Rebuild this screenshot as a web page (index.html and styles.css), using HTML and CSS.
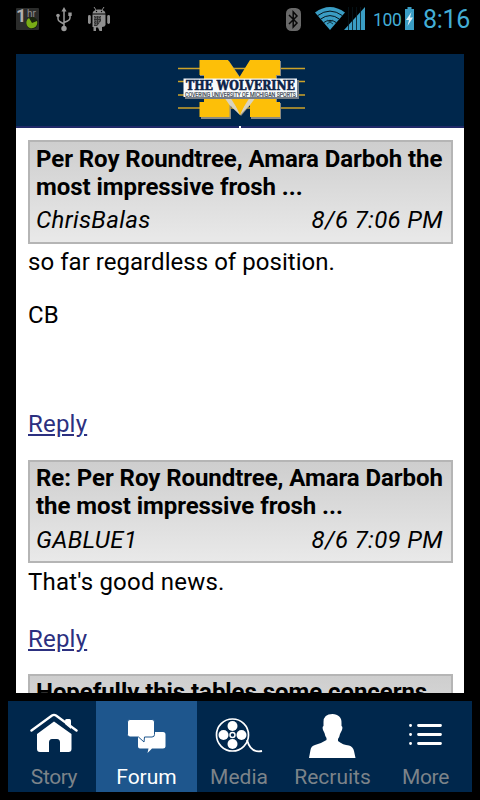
FILE: index.html
```html
<!DOCTYPE html>
<html lang="en">
<head>
  <meta charset="UTF-8" />
  <meta name="viewport" content="width=device-width, initial-scale=1.0"/>
  <title>The Wolverine - Forum</title>
  <link rel="stylesheet" href="styles.css">
</head>
<body>

  <div class="status-bar">
    <div class="status-left">
      <svg class="timer-icon" width="24" height="24" viewBox="0 0 24 24">
        <rect x="0" y="0" width="23" height="22" rx="1" fill="#2b2c2b"/>
        <text x="0" y="14" class="timer-num">1</text>
        <text x="11" y="9" class="timer-unit">hr</text>
        <circle cx="16" cy="15" r="6" fill="#19240c"/>
        <path d="M16 15L13 10A5.500 5.500 0 1 0 21 13Z" fill="#79ad16"/>
      </svg>
      <svg class="usb-icon" width="16" height="25" viewBox="0 0 16 25" fill="none" stroke="#9a9a9a" stroke-width="1.500">
        <path d="M8 4V21M2 9V12Q2 14 4.500 15L8 17M14 8V11Q14 13 11.500 14L8 15.500"/>
        <path d="M8 0L5.500 4.500H10.500Z" fill="#9a9a9a" stroke="none"/>
        <circle cx="8" cy="21.500" r="2.700" fill="#9a9a9a" stroke="none"/>
        <circle cx="2" cy="8.500" r="1.800" fill="#9a9a9a" stroke="none"/>
        <path d="M12.300 5.500H15.700V9H12.300Z" fill="#9a9a9a" stroke="none"/>
      </svg>
      <svg class="droid-icon" width="22" height="26" viewBox="0 0 22 26" fill="#8f8f8f">
        <path d="M6 1L8 4M16 1L14 4" stroke="#8f8f8f"/>
        <path d="M4.500 7.500C5 2 17 2 17.500 7.500Z"/>
        <rect x="0" y="9" width="2.800" height="9" rx="1.400"/>
        <rect x="19.200" y="9" width="2.800" height="9" rx="1.400"/>
        <path d="M4.500 8.500H17.500V19Q17 21 14 21V25H11.500L10 21.500H8V25H5.500V21H4.500Z"/>
        <path d="M6 10H13V15L9 20H6Z" fill="#303030"/>
        <path d="M6 12H13M6 15H12M6 18H10M8 10V20M11 10V17" stroke="#777" stroke-dasharray="1 1"/>
        <circle cx="8.500" cy="5.500" r=".7" fill="#000"/>
        <circle cx="13.500" cy="5.500" r=".7" fill="#000"/>
      </svg>
    </div>
    <div class="status-right">
      <svg class="bt-icon" width="15" height="23" viewBox="0 0 15 23">
        <rect width="15" height="23" rx="5.500" fill="#696969"/>
        <path d="M3 7L11 15L7.200 19V4L11 8L3 16" fill="none" stroke="#080808" stroke-width="1.500"/>
      </svg>
      <svg class="wifi-icon" width="30" height="23" viewBox="0 0 30 23">
        <path d="M0 5.500Q15 -5.500 30 5.500L15 23Z" fill="#3a9dc4"/>
        <path d="M2.500 8.700Q15 -.5 27.500 8.700M5.500 12.200Q15 5 24.500 12.200M8.500 15.700Q15 11 21.500 15.700" fill="none" stroke="#06151c" stroke-width="1"/>
        <path d="M12 13L18 17M18 13L12 17" stroke="#123d4d" stroke-width="1"/>
      </svg>
      <svg class="signal-icon" width="22" height="23" viewBox="0 0 22 23">
        <path d="M0 23L21 0V23Z" fill="#3a9dc4"/>
        <path d="M4.500 0V23M8.500 0V23M12.500 0V23M16.500 0V23" stroke="#06151c" stroke-width=".8"/>
      </svg>
      <span class="battery-level">100</span>
      <svg class="battery-icon" width="9" height="23" viewBox="0 0 9 23">
        <path d="M2.500 0H6.500V2H9V23H0V2H2.500Z" fill="#3a9dc4"/>
        <path d="M6.500 5L1 13H4L2.500 19L8 10.500H5Z" fill="#e2f2f8"/>
      </svg>
      <span class="clock">8:16</span>
    </div>
  </div>

  <div class="screen">
    <div class="header">
      <svg class="logo" width="128" height="62" viewBox="0 0 128 62">
        <path d="M0 9.500H127M0 22.500H127M0 36H127M0 49H127" stroke="#cda329" stroke-width="1.500"/>
        <path d="M22 2H51L62 18L72 2H103V17H99V44H103V60H73V45L63 57L53 45V60H23V44H27V17H22Z" fill="#8d8c82"/>
        <path d="M21.500 1H50L61.500 18L72 1H102V16H98V43H102V58H72V43L62 56L51.500 43V58H21.500V43H26V16H21.500Z" fill="#fdbf08"/>
        <path d="M46 38H54L62 56L51.500 46ZM70 38H78L72 46L62 56Z" fill="#d9d3bf"/>
        <path d="M52 38H72L62 54Z" fill="#fdbf08"/>
        <rect x="7" y="21" width="114" height="19" fill="#777e86"/>
        <rect x="5.500" y="19.500" width="113.500" height="18.500" fill="#f8fafb"/>
        <text class="logo-name" x="8" y="30.500" textLength="109" lengthAdjust="spacingAndGlyphs">THE WOLVERINE</text>
        <text class="logo-tagline" x="7" y="37.500" textLength="111" lengthAdjust="spacingAndGlyphs">COVERING UNIVERSITY OF MICHIGAN SPORTS</text>
      </svg>
      <span class="notch"></span>
    </div>

    <div class="post">
      <div class="post-head">
        <div class="post-title">Per Roy Roundtree, Amara Darboh the<br>most impressive frosh ...</div>
        <div class="post-info"><span>ChrisBalas</span><span>8/6 7:06 PM</span></div>
      </div>
      <div class="post-body long">
        <p>so far regardless of position.</p>
        <p>CB</p>
      </div>
      <a class="reply" href="#">Reply</a>
    </div>

    <div class="post">
      <div class="post-head">
        <div class="post-title">Re: Per Roy Roundtree, Amara Darboh<br>the most impressive frosh ...</div>
        <div class="post-info"><span>GABLUE1</span><span>8/6 7:09 PM</span></div>
      </div>
      <div class="post-body">
        <p>That's good news.</p>
      </div>
      <a class="reply" href="#">Reply</a>
    </div>

    <div class="post">
      <div class="post-head">
        <div class="post-title">Hopefully this tables some concerns</div>
      </div>
    </div>
  </div>

  <div class="tab-bar">
    <div class="tab story">
      <svg width="50" height="44" viewBox="0 0 50 44" fill="#fff">
        <path d="M36 6.500Q36 5 37.500 5H40.500Q42 5 42 6.500V15L36 10Z"/>
        <path d="M2.500 16.500L23 1.500Q25 .2 27 1.500L47.500 16.500" fill="none" stroke="#fff" stroke-width="2.400" stroke-linecap="round"/>
        <path d="M25 7.500L42.500 20V35Q42.500 38 39.500 38H31V28.500Q31 25 28 25H23Q20 25 20 28.500V38H11Q8 38 8 35V20Z"/>
      </svg>
      <span>Story</span>
    </div>
    <div class="tab forum active">
      <svg width="50" height="44" viewBox="0 0 50 44" fill="#fff">
        <path d="M18 18H41Q43.500 18 43.500 20.500V32.500Q43.500 34.500 41 34.500H30L25.500 39L26.500 34.500H18Q16 34.500 16 32.500V20Q16 18 18 18Z"/>
        <path d="M8 5.500H30Q32.500 5.500 32.500 8V20.500Q32.500 23 30 23H22.500L22 28L16.500 23H8Q5.500 23 5.500 20.500V8Q5.500 5.500 8 5.500Z" stroke="#1e568d" stroke-width="1"/>
      </svg>
      <span>Forum</span>
    </div>
    <div class="tab media">
      <svg width="50" height="44" viewBox="0 0 50 44" fill="#fff">
        <circle cx="18.500" cy="21" r="16" fill="none" stroke="#fff" stroke-width="1.700"/>
        <circle cx="18.500" cy="12" r="5"/>
        <circle cx="18.500" cy="30" r="5"/>
        <circle cx="9.500" cy="21" r="5"/>
        <circle cx="27.500" cy="21" r="5"/>
        <circle cx="18.500" cy="21" r="2.500" fill="none" stroke="#fff" stroke-width="1.400"/>
        <path d="M33 26C35 33 39 39 48 37" fill="none" stroke="#fff" stroke-width="1.800"/>
      </svg>
      <span>Media</span>
    </div>
    <div class="tab recruits">
      <svg width="50" height="46" viewBox="0 0 50 46" fill="#fff">
        <path d="M24.500 1C30 1 34 4.500 33.500 10V13Q35 13.500 34 17L32 21Q31.500 24 30 26V28Q35 32 41 32.500Q45 33.500 46 38L47.500 45H1L2.500 37Q3 33 7 32Q14 30 18.500 27V25Q17 23 16.500 20L15 17Q14 13.500 15.500 13V9Q15.500 1 24.500 1Z"/>
      </svg>
      <span>Recruits</span>
    </div>
    <div class="tab more">
      <svg width="50" height="44" viewBox="0 0 50 44" stroke="#fff" stroke-linecap="round">
        <path d="M17.500 11.500H39.500M17.500 20.500H39.500M17.500 29.500H39.500" stroke-width="2.800"/>
        <path d="M9.500 11.500H9.600M9.500 20.500H9.600M9.500 29.500H9.600" stroke-width="2.800"/>
      </svg>
      <span>More</span>
    </div>
  </div>

</body>
</html>
```

FILE: styles.css
```css
* {
  box-sizing: border-box;
}
body {
  margin: 0;
  width: 480px;
  height: 800px;
  background-color: #000;
  font-family: Roboto, "Noto Sans", sans-serif;
  overflow: hidden;
}
svg {
  display: block;
  flex-shrink: 0;
}
.status-bar {
  height: 54px;
  padding: 0 9px 0 16px;
  display: flex;
  justify-content: space-between;
  align-items: flex-start;
  color: #43aed6;
}
.status-left,
.status-right {
  display: flex;
  height: 40px;
  align-items: flex-start;
}
.timer-icon {
  margin-top: 8px;
}
.timer-num {
  font-size: 18px;
  font-weight: bold;
  fill: #b0b0b0;
}
.timer-unit {
  font-size: 10px;
  fill: #909090;
}
.usb-icon {
  margin: 7px 0 0 16px;
}
.droid-icon {
  margin: 6px 0 0 16px;
}
.bt-icon {
  margin-top: 8px;
}
.wifi-icon {
  margin: 7px 0 0 14px;
}
.signal-icon {
  margin: 7px 0 0 -1px;
}
.battery-level {
  width: 29px;
  margin: 10px 3px 0 7px;
  font-size: 17.5px;
  line-height: 20px;
  letter-spacing: -0.3px;
}
.battery-icon {
  margin-top: 7px;
}
.clock {
  width: 48px;
  margin: 5px 0 0 9px;
  font-size: 25px;
  line-height: 30px;
  letter-spacing: -0.3px;
}
.screen {
  width: 448px;
  height: 639px;
  margin-left: 16px;
  background-color: #fff;
  overflow: hidden;
}
.header {
  position: relative;
  height: 74px;
  padding: 5px 0 0 162px;
  background-color: #00274c;
  border-bottom: 2px solid #202a68;
}
.logo-name {
  font-family: "DejaVu Serif", serif;
  font-size: 12px;
  font-weight: bold;
  fill: #0c2348;
  stroke: #0c2348;
  stroke-width: 0.6px;
}
.logo-tagline {
  font-size: 6.5px;
  fill: #3b4652;
  stroke: #3b4652;
  stroke-width: 0.2px;
}
.notch {
  position: absolute;
  left: 223px;
  bottom: -2px;
  width: 2px;
  height: 2px;
  background-color: #fff;
}
.post {
  margin: 12px 11px 0 12px;
  font-size: 24px;
  line-height: 28px;
  color: #000;
}
.post-head {
  height: 104px;
  padding: 3px 8px 0 6px;
  border: 2px solid #b5b5b5;
  background: linear-gradient(#cecece, #e9e9e9);
}
.post + .post .post-head {
  height: 103px;
  padding-top: 2px;
}
.post-title {
  font-weight: bold;
  letter-spacing: -0.06px;
  white-space: nowrap;
}
.post-info {
  display: flex;
  justify-content: space-between;
  margin-top: 5px;
  font-style: italic;
  letter-spacing: 0.35px;
}
.post + .post .post-info {
  margin-top: 6px;
}
.post-body {
  height: 62px;
  padding-top: 4px;
  letter-spacing: 0.04px;
}
.post + .post .post-body {
  padding-top: 5px;
  letter-spacing: 0.2px;
}
.post-body.long {
  height: 166px;
}
.post-body p {
  margin: 0 0 25px;
}
.reply {
  display: block;
  width: fit-content;
  height: 38px;
  letter-spacing: 0.2px;
  color: #2c3080;
}
.post + .post .reply {
  height: 37px;
}
.tab-bar {
  display: flex;
  width: 464px;
  height: 91px;
  margin: 8px 0 0 8px;
  background-color: #00274c;
}
.tab {
  display: flex;
  flex-direction: column;
  align-items: center;
  padding-top: 12px;
  font-size: 21px;
  color: #7c8389;
}
.tab svg {
  height: 46px;
}
.tab span {
  margin-top: 6px;
  line-height: 24px;
}
.tab.active {
  background-color: #1e568d;
  color: #fff;
}
.story {
  width: 88px;
  padding-left: 4px;
}
.story span,
.more span {
  letter-spacing: -0.4px;
}
.forum {
  width: 101px;
}
.media {
  width: 84px;
}
.recruits {
  width: 103px;
}
.more {
  width: 88px;
  padding-right: 5px;
}
```
